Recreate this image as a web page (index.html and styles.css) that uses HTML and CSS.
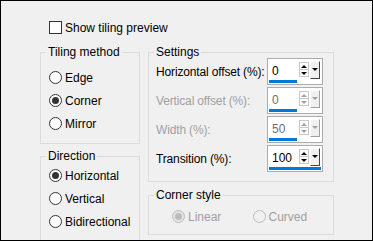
FILE: index.html
```html
<!DOCTYPE html>
<html lang="en">
<head>
  <meta charset="UTF-8">
  <title>Tiling</title>
  <link rel="stylesheet" href="styles.css">
</head>
<body>
  <div class="dialog">
    <label class="check-row"><span class="checkbox"></span>Show tiling preview</label>

    <div class="columns">
      <div class="col col-left">
        <fieldset class="group tiling">
          <legend>Tiling method</legend>
          <div class="radio"><span class="dot"></span>Edge</div>
          <div class="radio checked"><span class="dot"></span>Corner</div>
          <div class="radio"><span class="dot"></span>Mirror</div>
        </fieldset>

        <fieldset class="group direction">
          <legend>Direction</legend>
          <div class="radio checked"><span class="dot"></span>Horizontal</div>
          <div class="radio"><span class="dot"></span>Vertical</div>
          <div class="radio"><span class="dot"></span>Bidirectional</div>
        </fieldset>
      </div>

      <div class="col col-right">
        <fieldset class="group settings">
          <legend>Settings</legend>
          <div class="field first">
            <span class="field-label">Horizontal offset (%):</span>
            <div class="spin">
              <div class="spin-body">
                <span class="spin-value">0</span>
                <span class="spin-arrows"><i class="up"></i><i class="down"></i></span>
                <span class="spin-drop"><i></i></span>
              </div>
              <div class="spin-bar"></div>
            </div>
          </div>
          <div class="field disabled">
            <span class="field-label">Vertical offset (%):</span>
            <div class="spin">
              <div class="spin-body">
                <span class="spin-value">0</span>
                <span class="spin-arrows"><i class="up"></i><i class="down"></i></span>
                <span class="spin-drop"><i></i></span>
              </div>
              <div class="spin-bar"></div>
            </div>
          </div>
          <div class="field disabled">
            <span class="field-label">Width (%):</span>
            <div class="spin">
              <div class="spin-body">
                <span class="spin-value">50</span>
                <span class="spin-arrows"><i class="up"></i><i class="down"></i></span>
                <span class="spin-drop"><i></i></span>
              </div>
              <div class="spin-bar"></div>
            </div>
          </div>
          <div class="field">
            <span class="field-label">Transition (%):</span>
            <div class="spin">
              <div class="spin-body">
                <span class="spin-value">100</span>
                <span class="spin-arrows"><i class="up"></i><i class="down"></i></span>
                <span class="spin-drop"><i></i></span>
              </div>
              <div class="spin-bar full"></div>
            </div>
          </div>
        </fieldset>

        <fieldset class="group corner">
          <legend>Corner style</legend>
          <div class="corner-row">
            <div class="radio checked disabled"><span class="dot"></span>Linear</div>
            <div class="radio disabled"><span class="dot"></span>Curved</div>
          </div>
        </fieldset>
      </div>
    </div>
  </div>
</body>
</html>
```

FILE: styles.css
```css
body {
  margin: 0;
  background: #f0f0f0;
  font-family: "Liberation Sans", Arial, sans-serif;
  font-size: 12px;
  color: #000;
}
.dialog {
  width: 373px;
  height: 241px;
  box-sizing: border-box;
  border: 1px solid #000;
  background: #f0f0f0;
  padding: 19px 0 0 39px;
  overflow: hidden;
}
.check-row {
  display: flex;
  align-items: center;
  gap: 3px;
  height: 15px;
  margin-left: 9px;
}
.checkbox {
  width: 13px;
  height: 13px;
  box-sizing: border-box;
  border: 1px solid #333;
  background: #fff;
}
.columns {
  display: flex;
  align-items: flex-start;
  gap: 8px;
  margin-top: 10px;
}
.col {
  display: flex;
  flex-direction: column;
}
.col-left { width: 100px; }
.col-right { width: 186px; }

.group {
  margin: 0;
  min-width: 0;
  box-sizing: border-box;
  border: 1px solid #dcdcdc;
  padding: 0 0 8px 8px;
}
.group legend {
  padding: 0 2px;
  margin-left: -3px;
  line-height: 14px;
  height: 14px;
}
.tiling { padding-top: 7px; }
.direction { margin-top: 5px; padding-top: 1px; }
.settings { padding-left: 7px; }
.settings legend { margin-left: -2px; }
.corner { margin-top: 6px; padding: 3px 0 6px 7px; }
.corner legend { margin-left: -2px; }

/* radio buttons */
.radio {
  display: flex;
  align-items: center;
  gap: 3px;
  height: 23px;
}
.dot {
  width: 13px;
  height: 13px;
  box-sizing: border-box;
  border: 1px solid #333;
  border-radius: 50%;
  background: #fff;
  display: flex;
  align-items: center;
  justify-content: center;
}
.radio.checked .dot::after {
  content: "";
  width: 7px;
  height: 7px;
  border-radius: 50%;
  background: #333;
}
.radio.disabled { color: #a0a0a0; }
.radio.disabled .dot { border-color: #bcbcbc; background: #f0f0f0; }
.radio.checked.disabled .dot { background: #e4e4e4; }
.radio.checked.disabled .dot::after { background: #bcbcbc; }
.corner-row {
  display: flex;
  padding-left: 16px;
}
.corner-row .radio { width: 81px; }

/* numeric fields */
.field {
  display: flex;
  align-items: center;
  height: 29px;
}
.field.first { margin-top: -2px; }
.field-label {
  width: 111px;
  flex-shrink: 0;
  white-space: nowrap;
  letter-spacing: -0.15px;
}
.field.disabled .field-label { color: #a0a0a0; }

.spin {
  width: 56px;
  height: 27px;
  flex-shrink: 0;
  box-sizing: border-box;
  border: 1px solid #acacac;
  background: #fff;
  display: flex;
  flex-direction: column;
}
.spin-body {
  flex: 1;
  display: flex;
  align-items: center;
  padding: 0 2px 0 1px;
}
.spin-value {
  width: 30px;
  padding: 3px 0 0 3px;
  box-sizing: border-box;
}
.spin-arrows {
  width: 10px;
  height: 15px;
  box-sizing: border-box;
  border: 1px solid #c8c8c8;
  display: flex;
  flex-direction: column;
}
.spin-arrows i {
  flex: 1;
  display: flex;
  align-items: center;
  justify-content: center;
}
.spin-arrows .up { border-bottom: 1px solid #c8c8c8; }
.spin-arrows .up::after {
  content: "";
  border-left: 3px solid transparent;
  border-right: 3px solid transparent;
  border-bottom: 3px solid #000;
}
.spin-arrows .down::after {
  content: "";
  border-left: 3px solid transparent;
  border-right: 3px solid transparent;
  border-top: 3px solid #000;
}
.spin-drop {
  width: 10px;
  height: 18px;
  margin-left: 1px;
  box-sizing: border-box;
  background: #f0f0f0;
  border: 1px solid #fff;
  border-right-color: #444;
  border-bottom-color: #444;
  display: flex;
  align-items: center;
  justify-content: center;
}
.spin-drop i {
  border-left: 3px solid transparent;
  border-right: 3px solid transparent;
  border-top: 3px solid #000;
}
.spin-bar {
  width: 28px;
  height: 3px;
  margin: 0 0 1px 1px;
  background: #0078d7;
}
.spin-bar.full { width: 52px; }

.field.disabled .spin-value { color: #6d6d6d; }
.field.disabled .spin-arrows .up::after { border-bottom-color: #a0a0a0; }
.field.disabled .spin-arrows .down::after { border-top-color: #a0a0a0; }
.field.disabled .spin-drop { border-right-color: #a0a0a0; border-bottom-color: #a0a0a0; }
.field.disabled .spin-drop i { border-top-color: #a0a0a0; }
```
